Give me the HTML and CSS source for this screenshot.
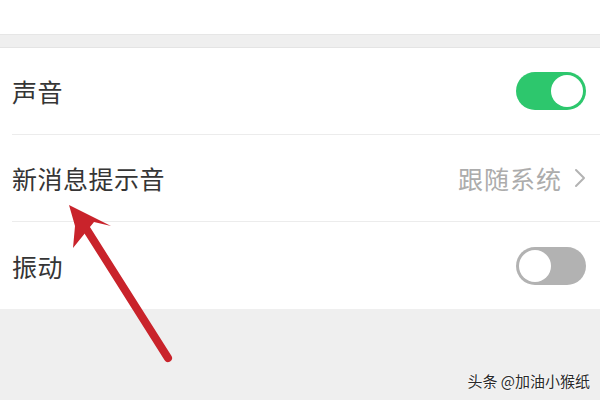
FILE: index.html
```html
<!DOCTYPE html>
<html lang="zh-CN">
<head>
    <meta charset="UTF-8">
    <meta name="viewport" content="width=device-width, initial-scale=1.0">
    <title>声音设置</title>
    <link rel="stylesheet" href="styles.css">
</head>
<body>
    <div class="page">
        <div class="top-block"></div>
        <div class="gap"></div>

        <div class="settings">
            <div class="row">
                <span class="label">声音</span>
                <span class="switch on"><span class="knob"></span></span>
            </div>
            <div class="row">
                <span class="label">新消息提示音</span>
                <span class="value">跟随系统
                    <svg class="chevron" width="12" height="20" viewBox="0 0 12 20">
                        <path d="M2 2 L10 10 L2 18" fill="none" stroke="#b3b3b3" stroke-width="2" stroke-linecap="round" stroke-linejoin="round"/>
                    </svg>
                </span>
            </div>
            <div class="row">
                <span class="label">振动</span>
                <span class="switch off"><span class="knob"></span></span>
            </div>
        </div>

        <div class="bottom"></div>

        <!-- annotation arrow -->
        <svg class="arrow" width="600" height="400" viewBox="0 0 600 400">
            <line x1="168" y1="358" x2="82" y2="222" stroke="#c9232b" stroke-width="8" stroke-linecap="round"/>
            <polygon points="69,205 111,226 94,222 73,248 75,226" fill="#c9232b"/>
        </svg>

        <div class="watermark">头条 @加油小猴纸</div>
    </div>
</body>
</html>
```

FILE: styles.css
```css
* {
    margin: 0;
    padding: 0;
    box-sizing: border-box;
}

body {
    font-family: "Noto Sans CJK SC", "Noto Sans", sans-serif;
    background: #efefef;
    width: 600px;
    height: 400px;
    overflow: hidden;
}

.page {
    position: relative;
    width: 600px;
    height: 400px;
}

.top-block {
    height: 35px;
    background: #ffffff;
    border-bottom: 1px solid #e6e6e6;
}

.gap {
    height: 13px;
    background: #efefef;
    border-bottom: 1px solid #e4e4e4;
}

.settings {
    background: #ffffff;
    padding-left: 12px;
}

.row {
    height: 87px;
    display: flex;
    align-items: center;
    justify-content: space-between;
    padding-right: 14px;
    border-bottom: 1px solid #ececec;
}

.row:last-child {
    border-bottom: none;
}

.label {
    font-size: 25px;
    color: #353535;
    letter-spacing: 0.5px;
}

.value {
    display: flex;
    align-items: center;
    gap: 12px;
    font-size: 25px;
    color: #acacac;
    letter-spacing: 1px;
}

.switch {
    width: 70px;
    height: 38px;
    border-radius: 19px;
    display: flex;
    align-items: center;
    padding: 0 3px;
}

.switch.on {
    background: #2dc76d;
    justify-content: flex-end;
}

.switch.off {
    background: #b2b2b2;
    justify-content: flex-start;
}

.knob {
    width: 32px;
    height: 32px;
    border-radius: 50%;
    background: #ffffff;
}

.bottom {
    height: 89px;
}

.arrow {
    position: absolute;
    left: 0;
    top: 0;
}

.watermark {
    position: absolute;
    right: 10px;
    bottom: 9px;
    font-size: 15px;
    color: #2a2a2a;
    text-shadow: 0 0 2px #fff, 0 0 2px #fff;
}
```
